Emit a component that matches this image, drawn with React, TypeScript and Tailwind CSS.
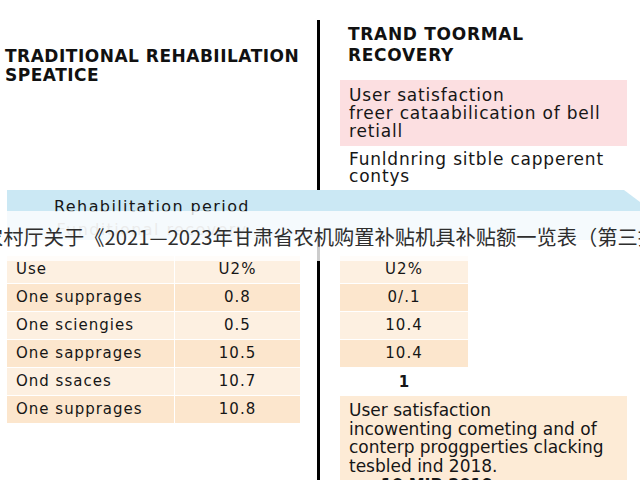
const leftRows = [
  ["Use", "U2%"],
  ["One supprages", "0.8"],
  ["One sciengies", "0.5"],
  ["One sapprages", "10.5"],
  ["Ond ssaces", "10.7"],
  ["One supprages", "10.8"],
]

const rightRows = ["U2%", "0/.1", "10.4", "10.4"]

export default function App() {
  return (
    <div className="relative h-[480px] w-[640px] overflow-hidden bg-white font-['DejaVu_Sans',sans-serif] text-[#161616]">
      {/* top: the two headings */}
      <div className="flex h-[190px]">
        <div className="w-[317px] pl-[5px] pt-[47px]">
          <h1 className="text-[17px] font-bold leading-[19px] tracking-[0.5px] text-[#111]">
            TRADITIONAL REHABIILATION
            <br />
            SPEATICE
          </h1>
        </div>
        <div className="mt-[20px] w-[3px] bg-black" />
        <div className="flex-1">
          <h2 className="pl-[28px] pt-[24px] text-[17px] font-bold leading-[21px] tracking-[0.7px] text-[#111]">
            TRAND TOORMAL
            <br />
            RECOVERY
          </h2>
          <div className="ml-[20px] mr-[13px] mt-[14px] bg-[#fcdfe1] px-[9px] py-[6px] text-[17px] leading-[18px] tracking-[0.8px]">
            User satisfaction
            <br />
            freer cataabilication of bell
            <br />
            retiall
          </div>
          <p className="ml-[29px] mt-[5px] text-[17px] leading-[17px] tracking-[0.8px]">
            Funldnring sitble capperent
            <br />
            contys
          </p>
        </div>
      </div>

      {/* blue band */}
      <div className="ml-[7px] h-[50px] bg-[#cbe8f4] pt-[7px] [clip-path:polygon(0_0,calc(100%_-_16px)_0,100%_12px,100%_100%,0_100%)]">
        <div className="w-[290px] text-center text-[16px] leading-[20px] tracking-[1.4px]">
          Rehabilitation period
        </div>
        <div className="mt-[3px] w-[290px] text-center text-[16px] leading-[20px] tracking-[1.4px] text-[#9a9a9a]">
          Funditional recovery
        </div>
      </div>

      {/* bottom: tables */}
      <div className="flex h-[240px]">
        <div className="w-[317px] pl-[7px] pt-[16px]">
          <div className="w-[293px]">
            {leftRows.map(([label, value], i) => (
              <div
                key={i}
                className={`flex h-[28px] items-center border-b border-white text-[15px] tracking-[1px] ${i % 2 ? "bg-[#fce6cd]" : "bg-[#fdf0e1]"}`}
              >
                <div className="flex h-full w-[168px] items-center border-r border-white pl-[9px]">{label}</div>
                <div className="flex-1 text-center">{value}</div>
              </div>
            ))}
          </div>
        </div>
        <div className="w-[3px] bg-black" />
        <div className="flex-1 pt-[16px]">
          <div className="ml-[20px] w-[128px]">
            {rightRows.map((value, i) => (
              <div
                key={i}
                className={`flex h-[28px] items-center justify-center border-b border-white text-[15px] tracking-[1px] ${i % 2 ? "bg-[#fce6cd]" : "bg-[#fdf0e1]"}`}
              >
                {value}
              </div>
            ))}
            <div className="flex h-[28px] items-center justify-center text-[15px] font-bold">1</div>
          </div>
          <div className="ml-[20px] mr-[13px] h-[90px] bg-[#fdebd6] pl-[9px] pt-[5px] text-[17px] leading-[18.5px]">
            User satisfaction
            <br />
            incowenting cometing and of
            <br />
            conterp proggperties clacking
            <br />
            tesbled ind 2018.
            <br />
            <span className="pl-[16px] text-[16px] font-bold">• 10 MIB 2019</span>
          </div>
        </div>
      </div>

      {/* caption strip laid over the page */}
      <div className="absolute left-0 right-0 top-[211px] h-[50px] overflow-hidden bg-white/80">
        <p className="ml-[-17px] whitespace-nowrap pt-[14px] font-['Noto_Sans_CJK_SC',sans-serif] text-[20.25px] leading-[24px] text-[#2e2e2e]">
          农村厅关于《2021—2023年甘肃省农机购置补贴机具补贴额一览表（第三批）》的公示
        </p>
      </div>
    </div>
  )
}
